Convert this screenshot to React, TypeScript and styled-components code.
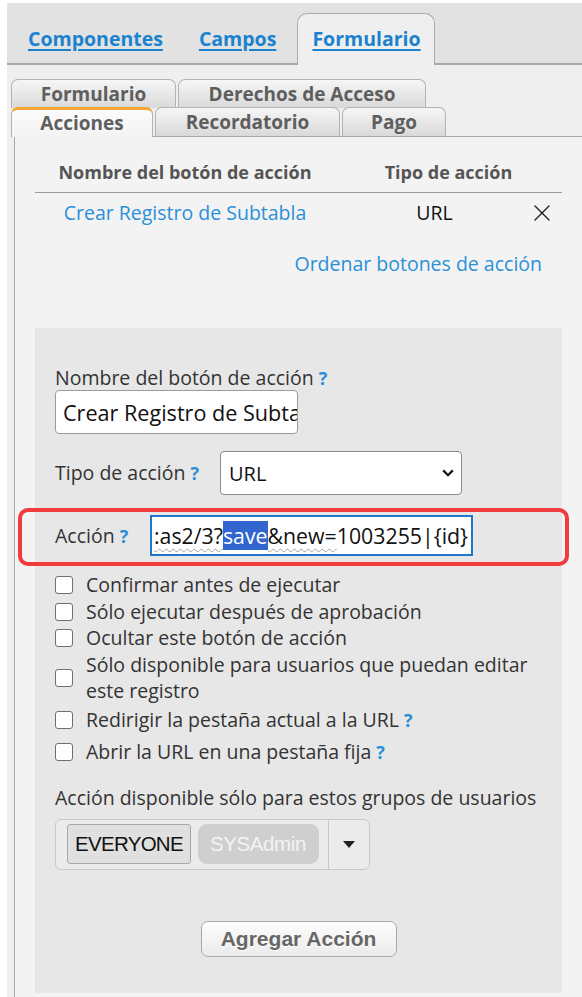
import React from "react";
import styled, { createGlobalStyle, css } from "styled-components";
import { X } from "lucide-react";

/**CSS *******************************************/
const GlobalStyle = createGlobalStyle`
  html, body {
    margin: 0;
    padding: 0;
    background: #fff;
  }
  body {
    font-family: "Open Sans", "Liberation Sans", sans-serif;
    color: #333;
  }
  * {
    box-sizing: border-box;
  }
`;

const Page = styled.div`
  margin: 3px 0 0 7px;
  width: 575px;
  background: #efefef;
  overflow: hidden;
`;

const TopBar = styled.div`
  display: flex;
  align-items: flex-end;
  gap: 7px;
  height: 62px;
  padding-left: 6px;
  background: #e2e2e2;
  border-bottom: 2px solid #a8a8a8;
`;

const TopTab = styled.a<{ $active?: boolean }>`
  height: 52px;
  margin-bottom: -2px;
  padding: 11px 13px 0 14px;
  border: 1px solid transparent;
  border-bottom: none;
  border-radius: 10px 10px 0 0;
  font-size: 19.5px;
  font-weight: 700;
  line-height: 28px;
  color: #1a82cf;
  text-decoration: underline;
  text-decoration-thickness: 1.5px;
  text-underline-offset: 3px;
  cursor: pointer;
  ${(p) =>
    p.$active &&
    css`
      background: #efefef;
      border-color: #a9a9a9;
    `}
`;

const SubArea = styled.div`
  padding-top: 14px;
`;

const TabStack = styled.div`
  padding-left: 4px;
`;

const TabRow = styled.div<{ $h: number }>`
  display: flex;
  align-items: flex-end;
  gap: 2px;
  height: ${(p) => p.$h}px;
  position: relative;
  z-index: 1;
`;

const SubTab = styled.div<{ $w: number; $active?: boolean }>`
  width: ${(p) => p.$w}px;
  height: 29px;
  border: 1px solid #b3b3b3;
  border-bottom: none;
  border-radius: 7px 7px 0 0;
  background: linear-gradient(#f6f6f6, #d9d9d9);
  text-align: center;
  font-size: 19px;
  font-weight: 700;
  line-height: 28px;
  color: #5e5e5e;
  cursor: pointer;
  ${(p) =>
    p.$active &&
    css`
      height: 30px;
      margin-bottom: -1px;
      border-top: 3px solid #f6a733;
      line-height: 26px;
      background: linear-gradient(#fbfbfb, #f3f3f3);
    `}
`;

const Panel = styled.div`
  margin-left: 7px;
  background: #f3f3f3;
  border-top: 1px solid #a9a9a9;
  border-left: 1px solid #a9a9a9;
  padding: 14px 20px 6px 20px;
`;

const ActionTable = styled.div`
  display: grid;
  grid-template-columns: 300px 1fr 40px;
`;

const HeadCell = styled.div<{ $span?: number }>`
  grid-column: span ${(p) => p.$span || 1};
  height: 42px;
  display: flex;
  align-items: center;
  justify-content: center;
  border-bottom: 1px solid #9a9a9a;
  font-size: 18px;
  font-weight: 700;
  color: #555;
`;

const Cell = styled.div<{ $pl?: number }>`
  height: 39px;
  display: flex;
  align-items: center;
  justify-content: center;
  padding-left: ${(p) => p.$pl || 0}px;
  font-size: 19.5px;
  color: #111;
`;

const LinkText = styled.a`
  color: #2a90d8;
  font-size: 19.5px;
  cursor: pointer;
`;

const SortLink = styled.div`
  margin-top: 20px;
  padding-right: 20px;
  text-align: right;
  line-height: 24px;
`;

const EditBox = styled.div`
  margin-top: 51px;
  background: #e7e7e7;
  padding: 38px 20px 36px 20px;
`;

const Label = styled.div<{ $w?: number }>`
  font-size: 19.5px;
  line-height: 24px;
  color: #333;
  white-space: nowrap;
  ${(p) => p.$w && `width: ${p.$w}px; flex-shrink: 0;`}
`;

const Help = styled.span`
  margin-left: 5px;
  font-size: 18px;
  font-weight: 700;
  color: #2b8fd6;
`;

const TextInput = styled.div`
  width: 243px;
  height: 44px;
  padding: 0 7px;
  display: flex;
  align-items: center;
  background: #fff;
  border: 1px solid #9b9b9b;
  border-radius: 4px;
  font-size: 21.6px;
  color: #111;
  white-space: nowrap;
  overflow: hidden;
`;

const FieldRow = styled.div<{ $mt: number }>`
  display: flex;
  align-items: center;
  margin-top: ${(p) => p.$mt}px;
  position: relative;
`;

const Highlighted = styled(FieldRow)`
  &::after {
    content: "";
    position: absolute;
    left: -37px;
    right: -27px;
    top: -7px;
    bottom: -10px;
    border: 4px solid #f03c3c;
    border-radius: 10px;
    pointer-events: none;
  }
`;

const SelectBox = styled.div`
  width: 242px;
  height: 44px;
  padding: 0 7px 0 8px;
  display: flex;
  align-items: center;
  justify-content: space-between;
  background: #fff;
  border: 1px solid #8a8a8a;
  border-radius: 4px;
  font-size: 20px;
  color: #111;
`;

const FocusInput = styled.div`
  width: 323px;
  height: 41px;
  padding: 0 2px;
  display: flex;
  align-items: center;
  background: #fff;
  border: 2px solid #1f77c9;
  font-size: 21.3px;
  color: #111;
  white-space: nowrap;
  overflow: hidden;
`;

const Misspelled = styled.span`
  text-decoration: underline wavy #a3a3a3;
  text-decoration-thickness: 1px;
  text-underline-offset: 4px;
`;

const Selection = styled.span`
  background: #3165d0;
  color: #fff;
`;

const CheckList = styled.div`
  margin-top: 16px;
`;

const CheckRow = styled.label<{ $h: number }>`
  display: flex;
  align-items: center;
  gap: 13px;
  min-height: ${(p) => p.$h}px;
  font-size: 19.5px;
  line-height: 26.5px;
  color: #333;
`;

const Box = styled.span`
  width: 18px;
  height: 18px;
  flex-shrink: 0;
  background: #fff;
  border: 1.5px solid #6e6e6e;
  border-radius: 3px;
`;

const GroupLabel = styled(Label)`
  margin-top: 18px;
`;

const GroupSelect = styled.div`
  margin-top: 9px;
  width: 315px;
  height: 51px;
  display: flex;
  align-items: center;
  padding-left: 11px;
  background: #ebebeb;
  border: 1px solid #c8c8c8;
  border-radius: 6px;
`;

const Chip = styled.span<{ $muted?: boolean }>`
  height: 40px;
  padding: 0 7px;
  margin-right: 7px;
  display: flex;
  align-items: center;
  font-family: "Liberation Sans", Arial, sans-serif;
  font-size: 20.5px;
  letter-spacing: -0.7px;
  color: #111;
  background: #e0e0e0;
  border: 1px solid #a8a8a8;
  border-radius: 3px;
  ${(p) =>
    p.$muted &&
    css`
      padding: 0 12px 0 11px;
      letter-spacing: -0.4px;
      color: #f3f3f3;
      background: #cfcfcf;
      border-color: #cfcfcf;
      border-radius: 9px;
    `}
`;

const Caret = styled.div`
  margin-left: auto;
  width: 41px;
  height: 100%;
  display: flex;
  align-items: center;
  justify-content: center;
  border-left: 1px solid #c8c8c8;
`;

const ButtonWrap = styled.div`
  margin-top: 51px;
  display: flex;
  justify-content: center;
`;

const AddButton = styled.button`
  width: 196px;
  height: 36px;
  padding: 0;
  background: linear-gradient(#fdfdfd, #ebebeb);
  border: 1px solid #a9a9a9;
  border-radius: 7px;
  font-family: "Liberation Sans", Arial, sans-serif;
  font-size: 21px;
  font-weight: 700;
  color: #666;
  text-shadow: 0 1px 0 #fff;
  cursor: pointer;
`;
/**CSS end****************************************/

type CheckOption = {
  text: React.ReactNode;
  help?: boolean;
};

const checkOptions: CheckOption[] = [
  { text: "Confirmar antes de ejecutar" },
  { text: "Sólo ejecutar después de aprobación" },
  { text: "Ocultar este botón de acción" },
  {
    text: (
      <>
        Sólo disponible para usuarios que puedan editar
        <br />
        este registro
      </>
    ),
  },
  { text: "Redirigir la pestaña actual a la URL", help: true },
  { text: "Abrir la URL en una pestaña fija", help: true },
];

const App = () => {
  return (
    <Page>
      <GlobalStyle />
      <TopBar>
        <TopTab>Componentes</TopTab>
        <TopTab>Campos</TopTab>
        <TopTab $active>Formulario</TopTab>
      </TopBar>

      <SubArea>
        <TabStack>
          <TabRow $h={29}>
            <SubTab $w={165}>Formulario</SubTab>
            <SubTab $w={248}>Derechos de Acceso</SubTab>
          </TabRow>
          <TabRow $h={28}>
            <SubTab $w={142} $active>
              Acciones
            </SubTab>
            <SubTab $w={185}>Recordatorio</SubTab>
            <SubTab $w={104}>Pago</SubTab>
          </TabRow>
        </TabStack>

        <Panel>
          <ActionTable>
            <HeadCell>Nombre del botón de acción</HeadCell>
            <HeadCell $span={2}>Tipo de acción</HeadCell>
            <Cell>
              <LinkText>Crear Registro de Subtabla</LinkText>
            </Cell>
            <Cell $pl={12}>URL</Cell>
            <Cell>
              <X size={28} strokeWidth={1.2} color="#222" />
            </Cell>
          </ActionTable>

          <SortLink>
            <LinkText>Ordenar botones de acción</LinkText>
          </SortLink>

          <EditBox>
            <Label>
              Nombre del botón de acción<Help>?</Help>
            </Label>
            <TextInput>Crear Registro de Subtabla</TextInput>

            <FieldRow $mt={17}>
              <Label $w={165}>
                Tipo de acción<Help>?</Help>
              </Label>
              <SelectBox>
                URL
                <svg width="12" height="8" viewBox="0 0 12 8">
                  <path d="M1.2 1.4 L6 6.2 L10.8 1.4" fill="none" stroke="#111" strokeWidth="2.2" />
                </svg>
              </SelectBox>
            </FieldRow>

            <Highlighted $mt={20}>
              <Label $w={95}>
                Acción<Help>?</Help>
              </Label>
              <FocusInput>
                <Misspelled>:as2/3?</Misspelled>
                <Selection>save</Selection>
                <Misspelled>&amp;new=</Misspelled>
                1003255|{"{id}"}
              </FocusInput>
            </Highlighted>

            <CheckList>
              {checkOptions.map((opt, i) => (
                <CheckRow key={i} $h={opt.help ? 31.5 : 26.5}>
                  <Box />
                  <span>
                    {opt.text}
                    {opt.help && <Help>?</Help>}
                  </span>
                </CheckRow>
              ))}
            </CheckList>

            <GroupLabel>Acción disponible sólo para estos grupos de usuarios</GroupLabel>
            <GroupSelect>
              <Chip>EVERYONE</Chip>
              <Chip $muted>SYSAdmin</Chip>
              <Caret>
                <svg width="12" height="7" viewBox="0 0 12 7">
                  <path d="M0 0 L12 0 L6 7 Z" fill="#222" />
                </svg>
              </Caret>
            </GroupSelect>

            <ButtonWrap>
              <AddButton>Agregar Acción</AddButton>
            </ButtonWrap>
          </EditBox>
        </Panel>
      </SubArea>
    </Page>
  );
};

export default App;
